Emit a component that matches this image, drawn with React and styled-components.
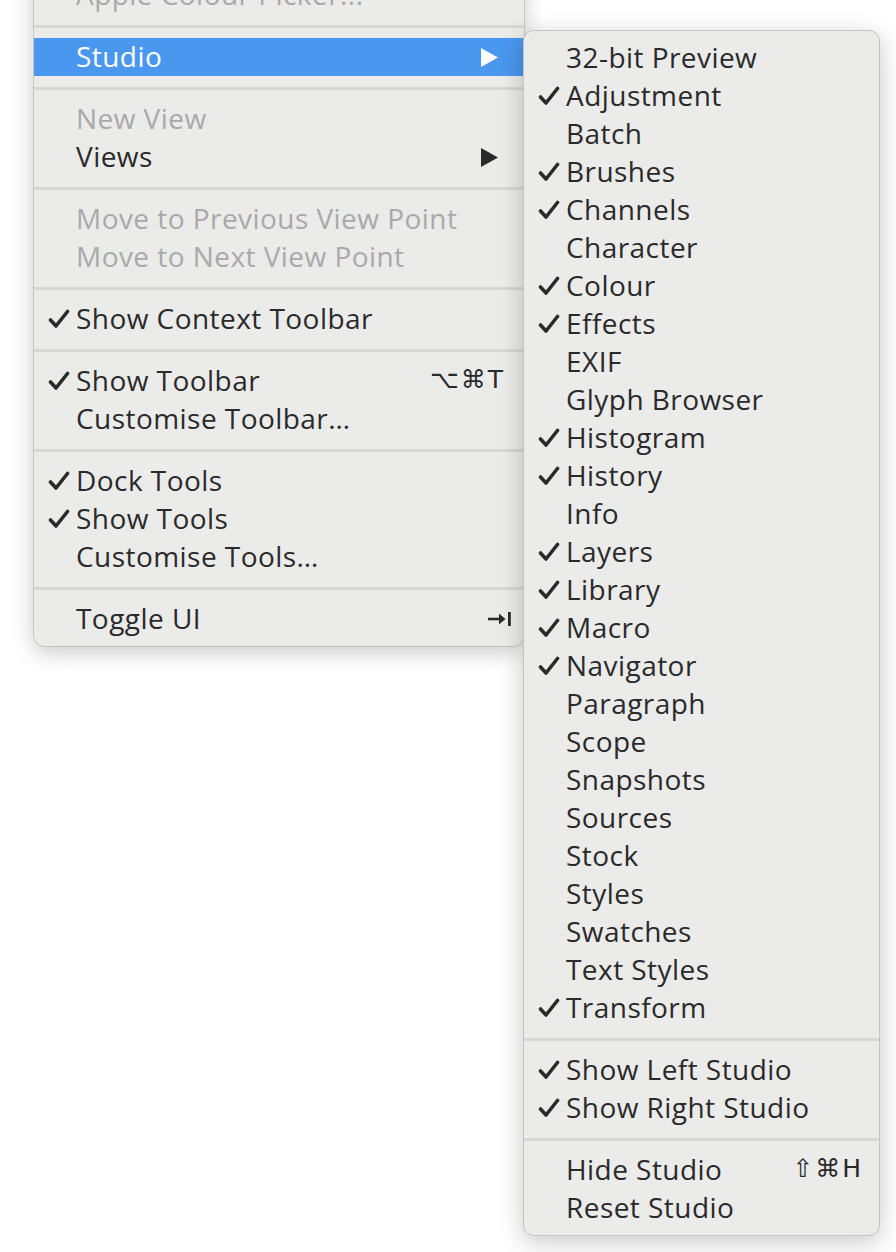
import React from 'react';
import styled, { createGlobalStyle } from 'styled-components';

const GlobalStyle = createGlobalStyle`
  html, body {
    margin: 0;
    padding: 0;
    background: #ffffff;
    overflow: hidden;
  }
  body {
    font-family: "Open Sans", "DejaVu Sans", sans-serif;
    -webkit-font-smoothing: antialiased;
  }
`;

const mainItems = [
  { label: 'Apple Colour Picker...', disabled: true },
  { sep: true },
  { label: 'Studio', submenu: true, active: true },
  { sep: true },
  { label: 'New View', disabled: true },
  { label: 'Views', submenu: true },
  { sep: true },
  { label: 'Move to Previous View Point', disabled: true },
  { label: 'Move to Next View Point', disabled: true },
  { sep: true },
  { label: 'Show Context Toolbar', checked: true },
  { sep: true },
  { label: 'Show Toolbar', checked: true, shortcut: '⌥⌘T' },
  { label: 'Customise Toolbar…' },
  { sep: true },
  { label: 'Dock Tools', checked: true },
  { label: 'Show Tools', checked: true },
  { label: 'Customise Tools…' },
  { sep: true },
  { label: 'Toggle UI', tab: true },
];

const studioItems = [
  ['32-bit Preview', false],
  ['Adjustment', true],
  ['Batch', false],
  ['Brushes', true],
  ['Channels', true],
  ['Character', false],
  ['Colour', true],
  ['Effects', true],
  ['EXIF', false],
  ['Glyph Browser', false],
  ['Histogram', true],
  ['History', true],
  ['Info', false],
  ['Layers', true],
  ['Library', true],
  ['Macro', true],
  ['Navigator', true],
  ['Paragraph', false],
  ['Scope', false],
  ['Snapshots', false],
  ['Sources', false],
  ['Stock', false],
  ['Styles', false],
  ['Swatches', false],
  ['Text Styles', false],
  ['Transform', true],
];

const subItems = [
  ...studioItems.map(([label, checked]) => ({ label, checked })),
  { sep: true },
  { label: 'Show Left Studio', checked: true },
  { label: 'Show Right Studio', checked: true },
  { sep: true },
  { label: 'Hide Studio', shortcut: '⇧⌘H' },
  { label: 'Reset Studio' },
];

const Check = () => (
  <svg width="22" height="20" viewBox="0 0 22 20">
    <path d="M2.5 11 L8 17 L19.5 2.5" fill="none" stroke="currentColor" strokeWidth="3.6" strokeLinecap="round" strokeLinejoin="round" />
  </svg>
);

const Arrow = () => (
  <svg width="17" height="19" viewBox="0 0 17 19">
    <polygon points="0,0 17,9.5 0,19" fill="currentColor" />
  </svg>
);

const TabKey = () => (
  <svg width="25" height="18" viewBox="0 0 25 18">
    <path d="M1 9 H16" stroke="currentColor" strokeWidth="2.6" />
    <path d="M12 3.5 L18.5 9 L12 14.5 Z" fill="currentColor" />
    <rect x="21" y="2" width="2.8" height="14" fill="currentColor" />
  </svg>
);

const Page = styled.div`
  display: flex;
  align-items: flex-start;
  padding-left: 34px;
  height: 1252px;
`;

const Menu = styled.div`
  background: #ebebea;
  display: flex;
  flex-direction: column;
  padding: 8px 0;
  box-sizing: border-box;
`;

const MainMenu = styled(Menu)`
  width: 490px;
  margin-top: -32px;
  border-radius: 0 0 11px 11px;
  box-shadow: 0 0 0 1px rgba(0, 0, 0, 0.12), 0 6px 22px rgba(0, 0, 0, 0.22);
  position: relative;
  z-index: 1;
`;

const SubMenu = styled(Menu)`
  width: 357px;
  margin-top: 30px;
  margin-left: -1px;
  border-radius: 11px;
  border: 1px solid #c4c4c4;
  box-shadow: 0 6px 24px rgba(0, 0, 0, 0.22);
  position: relative;
  z-index: 2;
`;

const Row = styled.div`
  height: 38px;
  box-sizing: border-box;
  padding-bottom: 3px;
  display: flex;
  align-items: center;
  font-size: 28px;
  letter-spacing: 0.45px;
  line-height: 34px;
  color: ${(p) => (p.$active ? '#ffffff' : p.$disabled ? '#a9a9a9' : '#2a2a2a')};
  background: ${(p) => (p.$active ? '#4a97f0' : 'transparent')};
  white-space: nowrap;
`;

const Mark = styled.span`
  width: 42px;
  flex: none;
  display: flex;
  justify-content: flex-end;
  padding-right: 6px;
  box-sizing: border-box;
  padding-top: 3px;
`;

const Label = styled.span`
  flex: 1;
`;

const Shortcut = styled.span`
  font-family: "DejaVu Sans", sans-serif;
  font-size: 25px;
  letter-spacing: 2px;
  margin-right: ${(p) => p.$right}px;
`;

const Side = styled.span`
  display: flex;
  align-items: center;
  padding-top: 3px;
  margin-right: ${(p) => p.$right}px;
`;

const Separator = styled.div`
  height: 24px;
  display: flex;
  align-items: center;
  &::after {
    content: '';
    flex: 1;
    height: 3px;
    background: #d7d7d7;
  }
`;

const Items = ({ items, right }) =>
  items.map((it, i) =>
    it.sep ? (
      <Separator key={i} />
    ) : (
      <Row key={i} $active={it.active} $disabled={it.disabled}>
        <Mark>{it.checked && <Check />}</Mark>
        <Label>{it.label}</Label>
        {it.shortcut && <Shortcut $right={right}>{it.shortcut}</Shortcut>}
        {it.submenu && (
          <Side $right={26}>
            <Arrow />
          </Side>
        )}
        {it.tab && (
          <Side $right={12}>
            <TabKey />
          </Side>
        )}
      </Row>
    )
  );

export default function App() {
  return (
    <>
      <GlobalStyle />
      <Page>
        <MainMenu>
          <Items items={mainItems} right={19} />
        </MainMenu>
        <SubMenu>
          <Items items={subItems} right={16} />
        </SubMenu>
      </Page>
    </>
  );
}
